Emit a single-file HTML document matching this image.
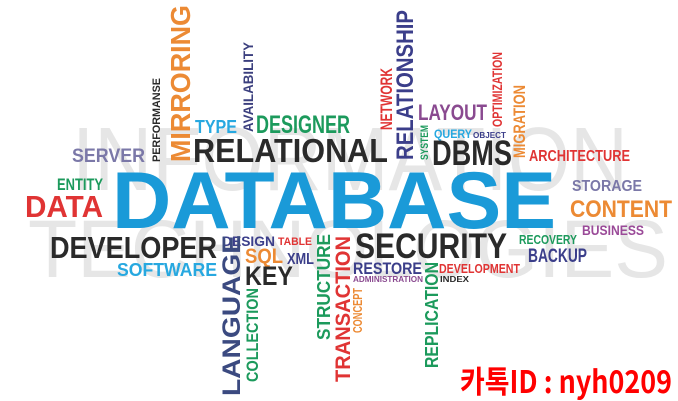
<!DOCTYPE html>
<html><head><meta charset="utf-8"><style>
html,body{margin:0;padding:0;background:#fff;}
body{width:678px;height:401px;overflow:hidden;}
svg{display:block;}
text{font-family:"Liberation Sans",sans-serif;font-weight:bold;}
.bg{font-weight:normal;fill:#e6e6e6;}
</style></head><body>
<svg width="678" height="401" viewBox="0 0 678 401" xmlns="http://www.w3.org/2000/svg">
<text class="bg" x="72" y="190" font-size="90" textLength="556" lengthAdjust="spacingAndGlyphs">INFORMATION</text>
<text class="bg" x="28" y="277" font-size="82" textLength="640" lengthAdjust="spacingAndGlyphs">TECHNOLOGIES</text>

<text transform="translate(190,162) rotate(-90)" font-size="28" fill="#ec8a34" textLength="157" lengthAdjust="spacingAndGlyphs">MIRRORING</text>
<text transform="translate(160,162) rotate(-90)" font-size="11" fill="#2a2a2a" textLength="84" lengthAdjust="spacingAndGlyphs">PERFORMANSE</text>
<text transform="translate(253,132) rotate(-90)" font-size="14" fill="#3b3f7e" textLength="90" lengthAdjust="spacingAndGlyphs">AVAILABILITY</text>
<text x="195" y="133" font-size="18" fill="#27a8e0" textLength="42" lengthAdjust="spacingAndGlyphs">TYPE</text>
<text x="256" y="133" font-size="25" fill="#1c9a5c" textLength="94" lengthAdjust="spacingAndGlyphs">DESIGNER</text>
<text x="193" y="162" font-size="33.5" fill="#2a2a2a" textLength="195" lengthAdjust="spacingAndGlyphs">RELATIONAL</text>
<text x="72" y="162" font-size="19.5" fill="#7b78a8" textLength="73" lengthAdjust="spacingAndGlyphs">SERVER</text>
<text x="57" y="190" font-size="16.5" fill="#1c9a5c" textLength="46" lengthAdjust="spacingAndGlyphs">ENTITY</text>
<text x="25" y="217" font-size="31" fill="#e03434" textLength="78" lengthAdjust="spacingAndGlyphs">DATA</text>
<text x="112" y="228" font-size="81" fill="#1a9ad8" textLength="444" lengthAdjust="spacingAndGlyphs">DATABASE</text>

<text transform="translate(392,130) rotate(-90)" font-size="16.5" fill="#e03434" textLength="62" lengthAdjust="spacingAndGlyphs">NETWORK</text>
<text transform="translate(413,160) rotate(-90)" font-size="24" fill="#3b3e8a" textLength="150" lengthAdjust="spacingAndGlyphs">RELATIONSHIP</text>
<text x="418" y="120" font-size="22" fill="#8a4a90" textLength="69" lengthAdjust="spacingAndGlyphs">LAYOUT</text>
<text transform="translate(428,160) rotate(-90)" font-size="11" fill="#1c9a5c" textLength="35" lengthAdjust="spacingAndGlyphs">SYSTEM</text>
<text x="434" y="138" font-size="12" fill="#27a8e0" textLength="38" lengthAdjust="spacingAndGlyphs">QUERY</text>
<text x="473" y="138" font-size="8.4" fill="#3b3e8a" textLength="33" lengthAdjust="spacingAndGlyphs">OBJECT</text>
<text x="432" y="165" font-size="35" fill="#2a2a2a" textLength="80" lengthAdjust="spacingAndGlyphs">DBMS</text>
<text transform="translate(502,127) rotate(-90)" font-size="14" fill="#e03434" textLength="75" lengthAdjust="spacingAndGlyphs">OPTIMIZATION</text>
<text transform="translate(525,158) rotate(-90)" font-size="16.5" fill="#ec8a34" textLength="73" lengthAdjust="spacingAndGlyphs">MIGRATION</text>
<text x="529" y="161" font-size="15.4" fill="#e03434" textLength="101" lengthAdjust="spacingAndGlyphs">ARCHITECTURE</text>
<text x="572" y="191" font-size="15.4" fill="#7b78a8" textLength="70" lengthAdjust="spacingAndGlyphs">STORAGE</text>
<text x="570" y="217" font-size="23.7" fill="#ec8a34" textLength="102" lengthAdjust="spacingAndGlyphs">CONTENT</text>
<text x="582" y="235" font-size="14" fill="#9a4a98" textLength="62" lengthAdjust="spacingAndGlyphs">BUSINESS</text>
<text x="519" y="244" font-size="12.6" fill="#1c9a5c" textLength="58" lengthAdjust="spacingAndGlyphs">RECOVERY</text>
<text x="528" y="262" font-size="19.5" fill="#3b3e8a" textLength="59" lengthAdjust="spacingAndGlyphs">BACKUP</text>
<text x="355" y="258" font-size="35" fill="#2a2a2a" textLength="152" lengthAdjust="spacingAndGlyphs">SECURITY</text>
<text x="353" y="274" font-size="16.8" fill="#3b3e8a" textLength="69" lengthAdjust="spacingAndGlyphs">RESTORE</text>
<text x="353" y="282" font-size="8.4" fill="#8a4a90" textLength="70" lengthAdjust="spacingAndGlyphs">ADMINISTRATION</text>
<text x="439" y="273" font-size="12.6" fill="#e03434" textLength="81" lengthAdjust="spacingAndGlyphs">DEVELOPMENT</text>
<text x="440" y="282" font-size="8.4" fill="#2a2a2a" textLength="29" lengthAdjust="spacingAndGlyphs">INDEX</text>
<text transform="translate(438,368) rotate(-90)" font-size="18" fill="#1c9a5c" textLength="106" lengthAdjust="spacingAndGlyphs">REPLICATION</text>
<text transform="translate(350,382) rotate(-90)" font-size="21" fill="#e03434" textLength="146" lengthAdjust="spacingAndGlyphs">TRANSACTION</text>
<text transform="translate(362,333) rotate(-90)" font-size="12.6" fill="#ec8a34" textLength="45" lengthAdjust="spacingAndGlyphs">CONCEPT</text>
<text transform="translate(330,340) rotate(-90)" font-size="18" fill="#1c9a5c" textLength="106" lengthAdjust="spacingAndGlyphs">STRUCTURE</text>

<text x="50" y="258" font-size="31" fill="#2a2a2a" textLength="167" lengthAdjust="spacingAndGlyphs">DEVELOPER</text>
<text x="117" y="276" font-size="18" fill="#27a8e0" textLength="100" lengthAdjust="spacingAndGlyphs">SOFTWARE</text>
<text x="222" y="246" font-size="14" fill="#3b3e8a" textLength="53" lengthAdjust="spacingAndGlyphs">DESIGN</text>
<text x="278" y="245" font-size="11" fill="#e03434" textLength="34" lengthAdjust="spacingAndGlyphs">TABLE</text>
<text x="245" y="263" font-size="21.5" fill="#ec8a34" textLength="38" lengthAdjust="spacingAndGlyphs">SQL</text>
<text x="287" y="264" font-size="15.4" fill="#3b3e8a" textLength="27" lengthAdjust="spacingAndGlyphs">XML</text>
<text x="245" y="285" font-size="26.5" fill="#2a2a2a" textLength="48" lengthAdjust="spacingAndGlyphs">KEY</text>
<text transform="translate(240,396) rotate(-90)" font-size="25" fill="#3b4a80" textLength="161" lengthAdjust="spacingAndGlyphs">LANGUAGE</text>
<text transform="translate(258,382) rotate(-90)" font-size="16.7" fill="#1c9a5c" textLength="94" lengthAdjust="spacingAndGlyphs">COLLECTION</text>

<text x="460" y="393" font-size="31" fill="#ff0000" style="font-weight:bold;font-family:'Noto Sans CJK KR','Liberation Sans',sans-serif;" textLength="212" lengthAdjust="spacingAndGlyphs">카톡ID : nyh0209</text>
</svg>
</body></html>
